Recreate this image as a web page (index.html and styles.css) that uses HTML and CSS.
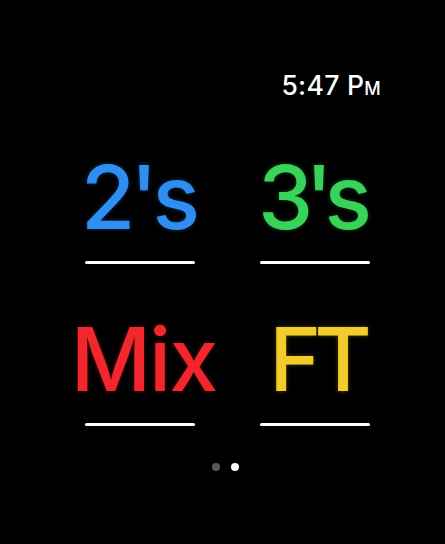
FILE: index.html
```html
<!DOCTYPE html>
<html>
<head>
<meta charset="utf-8">
<link rel="stylesheet" href="styles.css">
</head>
<body>
<div class="screen">
  <div class="status">
    <span class="time">5:47 P<span class="small">M</span></span>
  </div>
  <div class="grid">
    <div class="cell">
      <div class="word blue">2's</div>
      <div class="line"></div>
    </div>
    <div class="cell">
      <div class="word green">3's</div>
      <div class="line"></div>
    </div>
    <div class="cell">
      <div class="word red">Mix</div>
      <div class="line"></div>
    </div>
    <div class="cell">
      <div class="word yellow">FT</div>
      <div class="line"></div>
    </div>
  </div>
  <div class="dots">
    <span class="dot"></span>
    <span class="dot active"></span>
  </div>
</div>
</body>
</html>
```
FILE: styles.css
```css
html, body {
  margin: 0;
  padding: 0;
  background: #000;
}
.screen {
  width: 445px;
  height: 544px;
  background: #000;
  font-family: Inter, "Liberation Sans", sans-serif;
  color: #fff;
  overflow: hidden;
}
.status {
  display: flex;
  justify-content: flex-end;
  padding: 70px 64px 0 0;
  height: 30px;
}
.time {
  font-size: 26.5px;
  line-height: 30px;
  font-weight: 500;
  letter-spacing: 0.3px;
}
.time .small {
  font-size: 18px;
}
.grid {
  display: grid;
  grid-template-columns: 110px 110px;
  column-gap: 65px;
  row-gap: 51px;
  padding: 53px 0 0 85px;
}
.cell {
  display: flex;
  flex-direction: column;
  align-items: center;
}
.word {
  font-size: 88px;
  line-height: 88px;
  font-weight: 500;
  white-space: nowrap;
}
.blue { color: #2f8ef2; text-shadow: 0 0 4px rgba(47,142,242,0.35); letter-spacing: -5px; padding-right: 4px; }
.green { color: #38d35a; text-shadow: 0 0 4px rgba(56,211,90,0.35); letter-spacing: -8px; padding-right: 8px; }
.red { color: #f2262d; text-shadow: 0 0 4px rgba(242,38,45,0.35); letter-spacing: -2px; padding-left: 7px; }
.yellow { color: #f3cb2a; text-shadow: 0 0 4px rgba(243,203,42,0.35); letter-spacing: -7px; padding-left: 4px; }
.line {
  width: 110px;
  height: 3px;
  background: #fff;
  border-radius: 2px;
  margin-top: 20px;
}
.dots {
  display: flex;
  justify-content: center;
  gap: 11px;
  padding: 37px 0 0 6px;
}
.dot {
  width: 8px;
  height: 8px;
  border-radius: 50%;
  background: #5a5a5a;
}
.dot.active {
  background: #fff;
}
```
